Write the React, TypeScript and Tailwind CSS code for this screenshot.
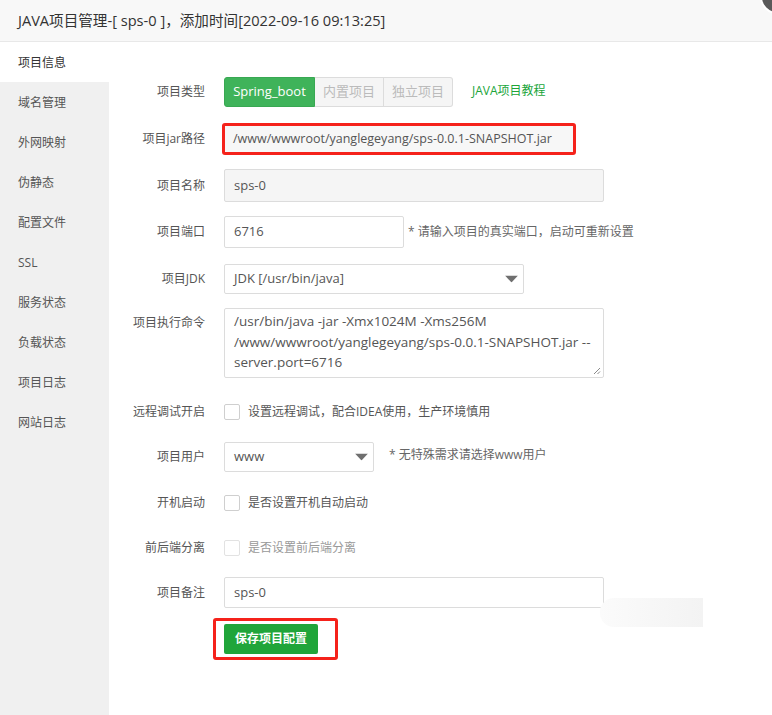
import React from "react";

const FONT = { fontFamily: '"Open Sans", "Noto Sans CJK SC", sans-serif' };

function Label({ children, h = 32 }: { children: React.ReactNode; h?: number }) {
  return (
    <div className="w-[96px] shrink-0 flex items-center justify-end text-[12px] text-[#555]" style={{ height: h }}>
      {children}
    </div>
  );
}

function Caret() {
  return (
    <svg width="13" height="7" viewBox="0 0 13 7" className="absolute right-[5px] top-1/2 -translate-y-1/2">
      <path d="M0 0 L13 0 L6.5 7 Z" fill="#6f6f6f" />
    </svg>
  );
}

function Checkbox() {
  return <div className="w-[16px] h-[16px] border border-[#cfcfcf] rounded-[2px] bg-white shrink-0" />;
}

export default function App() {
  const side = ["项目信息", "域名管理", "外网映射", "伪静态", "配置文件", "SSL", "服务状态", "负载状态", "项目日志", "网站日志"];
  return (
    <div className="relative w-[772px] h-[715px] bg-white overflow-hidden" style={FONT}>
      <div className="h-[42px] bg-[#f8f8f8] border-b border-[#e8e8e8] flex items-center pl-[18px] text-[14.6px] text-[#333]">
        JAVA项目管理-[ sps-0 ]，添加时间[2022-09-16 09:13:25]
      </div>
      <div className="flex h-[673px]">
        <div className="w-[109px] shrink-0 bg-[#f0f0f0]">
          {side.map((s, i) => (
            <div
              key={s}
              className={`h-[40px] flex items-center pl-[18px] pt-[1px] text-[12px] ${i === 0 ? "bg-white text-[#333]" : "text-[#555]"}`}
            >
              {s}
            </div>
          ))}
        </div>
        <div className="flex-1 pt-[35px] text-[#555]">
          {/* 项目类型 */}
          <div className="flex h-[46px]">
            <Label h={30}>项目类型</Label>
            <div className="ml-[19px] flex items-center h-[30px]">
              <div className="h-[30px] w-[91px] bg-[#3fb35a] border border-[#38a852] rounded-l-[3px] text-white text-[13px] flex items-center justify-center">
                Spring_boot
              </div>
              <div className="h-[30px] w-[69px] bg-[#f5f5f5] border border-[#dcdcdc] border-l-0 text-[#bbb] text-[13px] flex items-center justify-center">
                内置项目
              </div>
              <div className="h-[30px] w-[69px] bg-[#f5f5f5] border border-[#dcdcdc] border-l-0 rounded-r-[3px] text-[#bbb] text-[13px] flex items-center justify-center">
                独立项目
              </div>
              <span className="ml-[19px] text-[12px] text-[#20a53a] -mt-[3px]">JAVA项目教程</span>
            </div>
          </div>
          {/* jar */}
          <div className="flex h-[46px]">
            <Label h={32}>项目jar路径</Label>
            <div className="ml-[17px] w-[354px] h-[32px] border-[3px] border-[#f5221b] rounded-[3px] bg-[#f7f7f7] flex items-center pl-[8px] text-[12.5px] text-[#555]">
              /www/wwwroot/yanglegeyang/sps-0.0.1-SNAPSHOT.jar
            </div>
          </div>
          {/* 名称 */}
          <div className="flex h-[47px]">
            <Label h={33}>项目名称</Label>
            <div className="ml-[19px] w-[380px] h-[33px] border border-[#dcdcdc] rounded-[2px] bg-[#f5f5f5] flex items-center pl-[9px] text-[13px] text-[#555]">
              sps-0
            </div>
          </div>
          {/* 端口 */}
          <div className="flex h-[48px]">
            <Label h={32}>项目端口</Label>
            <div className="ml-[19px] w-[180px] h-[32px] border border-[#dcdcdc] rounded-[2px] bg-white flex items-center pl-[9px] text-[13px] text-[#555]">
              6716
            </div>
            <div className="ml-[4px] h-[32px] flex items-center text-[12px] text-[#666]">* 请输入项目的真实端口，启动可重新设置</div>
          </div>
          {/* JDK */}
          <div className="flex h-[44px]">
            <Label h={30}>项目JDK</Label>
            <div className="relative ml-[19px] w-[300px] h-[30px] border border-[#dcdcdc] rounded-[2px] bg-white flex items-center pl-[9px] text-[13px] text-[#555]">
              JDK [/usr/bin/java]
              <Caret />
            </div>
          </div>
          {/* 命令 */}
          <div className="flex h-[89px]">
            <Label h={30}>项目执行命令</Label>
            <div className="relative ml-[19px] w-[380px] h-[70px] border border-[#dcdcdc] rounded-[2px] bg-white pl-[9px] pt-[2px] text-[13.5px] leading-[20.5px] text-[#555]">
              <div>/usr/bin/java -jar -Xmx1024M -Xms256M</div>
              <div>/www/wwwroot/yanglegeyang/sps-0.0.1-SNAPSHOT.jar --</div>
              <div>server.port=6716</div>
              <svg width="8" height="8" viewBox="0 0 8 8" className="absolute right-[2px] bottom-[2px]">
                <path d="M7 1 L1 7 M7 4.5 L4.5 7" stroke="#8a8a8a" strokeWidth="1" />
              </svg>
            </div>
          </div>
          {/* 远程调试 */}
          <div className="flex h-[45px]">
            <Label h={30}>远程调试开启</Label>
            <div className="ml-[19px] h-[30px] flex items-center">
              <Checkbox />
              <span className="ml-[8px] text-[12px] text-[#555]">设置远程调试，配合IDEA使用，生产环境慎用</span>
            </div>
          </div>
          {/* 用户 */}
          <div className="flex h-[46px]">
            <Label h={30}>项目用户</Label>
            <div className="relative ml-[19px] w-[150px] h-[30px] border border-[#dcdcdc] rounded-[2px] bg-white flex items-center pl-[9px] text-[13px] text-[#555]">
              www
              <Caret />
            </div>
            <div className="ml-[15px] h-[26px] flex items-center text-[12px] text-[#666]">* 无特殊需求请选择www用户</div>
          </div>
          {/* 开机启动 */}
          <div className="flex h-[45px]">
            <Label h={30}>开机启动</Label>
            <div className="ml-[19px] h-[30px] flex items-center">
              <Checkbox />
              <span className="ml-[8px] text-[12px] text-[#555]">是否设置开机自动启动</span>
            </div>
          </div>
          {/* 前后端分离 */}
          <div className="flex h-[44px]">
            <Label h={30}>前后端分离</Label>
            <div className="ml-[19px] h-[30px] flex items-center">
              <div className="w-[16px] h-[16px] border border-[#e2e2e2] rounded-[2px] bg-white shrink-0" />
              <span className="ml-[8px] text-[12px] text-[#999]">是否设置前后端分离</span>
            </div>
          </div>
          {/* 备注 */}
          <div className="flex h-[47px]">
            <Label h={31}>项目备注</Label>
            <div className="ml-[19px] w-[380px] h-[31px] border border-[#dcdcdc] rounded-[2px] bg-white flex items-center pl-[9px] text-[13px] text-[#555]">
              sps-0
            </div>
          </div>
          {/* save */}
          <div className="flex">
            <div className="w-[96px] shrink-0" />
            <div className="ml-[8px] -mt-[6px] p-[3px] border-[3px] border-[#f5221b] rounded-[3px]">
              <div className="ml-[5px] mr-[14px] w-[94px] h-[30px] bg-[#20a53a] rounded-[2px] text-white text-[12px] font-bold flex items-center justify-center">
                保存项目配置
              </div>
            </div>
          </div>
        </div>
      </div>
      <div className="absolute left-[600px] top-[598px] w-[103px] h-[29px] rounded-l-[14px] bg-gradient-to-r from-[#fbfbfb] to-[#f3f3f3]" />
      <div className="absolute right-[-22px] top-[-20px] w-[34px] h-[34px] rounded-full bg-[#5a5a5a] border-2 border-white" />
    </div>
  );
}
